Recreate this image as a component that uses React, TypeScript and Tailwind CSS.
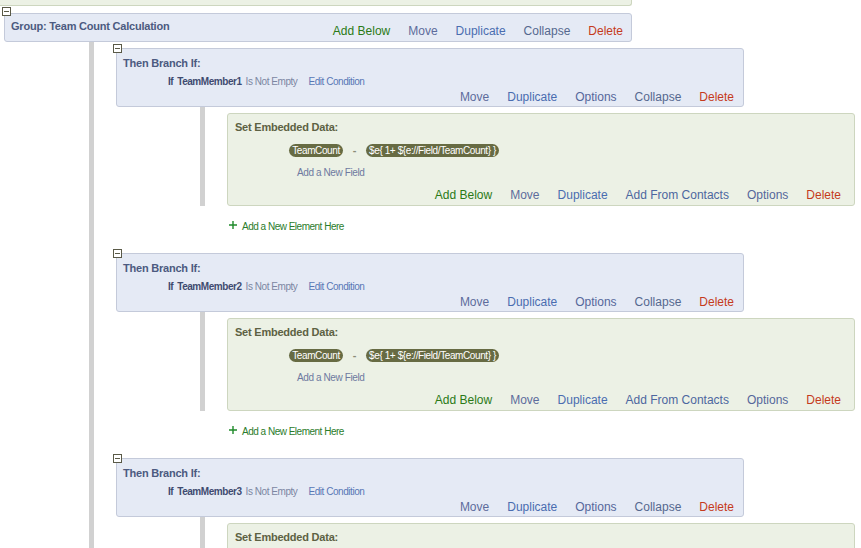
import React from "react";

const Toggle = ({ cls }: { cls: string }) => (
  <div className={`absolute ${cls} w-[9px] h-[9px] border border-[#5a5a48] bg-white flex items-center justify-center z-10`}>
    <div className="w-[5px] h-px bg-[#5a5a48]" />
  </div>
);

const Link = ({ color, children }: { color: string; children: React.ReactNode }) => (
  <span className={color}>{children}</span>
);

const Pill = ({ w, children }: { w: string; children: React.ReactNode }) => (
  <div className={`${w} h-[13px] rounded-full bg-[#676b43] text-white text-[10px] leading-[13px] tracking-[-0.04em] flex items-center justify-center`}>
    {children}
  </div>
);

const Block = ({ n, first }: { n: number; first?: boolean }) => (
  <div className="relative">
    <div className={first ? "pt-[6px]" : "pt-[6px]"}>
      <Toggle cls="left-[-3px] top-[2px]" />
      <div className="w-[628px] h-[59px] bg-[#e5eaf5] border border-[#c4cada] rounded-[3px] flex flex-col">
        <div className="pl-[6px] pt-[8px] text-[11px] leading-[12px] font-bold text-[#4c5a80] tracking-[-0.02em]">
          Then Branch If:
        </div>
        <div className="pl-[51px] mt-[8px] text-[10px] leading-[10px] tracking-[-0.045em] flex items-center">
          <span className="font-bold text-[#3f4b70]">If</span>
          <span className="font-bold text-[#3f4b70] ml-[4px]">TeamMember{n}</span>
          <span className="text-[#7c86a2] ml-[4px]">Is Not Empty</span>
          <span className="text-[#5877b5] ml-[11px]">Edit Condition</span>
        </div>
        <div className="mt-[3px] pr-[9px] flex justify-end gap-[18px] text-[12px] leading-[14px]">
          <Link color="text-[#5d6c9c]">Move</Link>
          <Link color="text-[#4a6db0]">Duplicate</Link>
          <Link color="text-[#55679b]">Options</Link>
          <Link color="text-[#55688f]">Collapse</Link>
          <Link color="text-[#c53a1c]">Delete</Link>
        </div>
      </div>
    </div>
    <div className="flex">
      <div className="w-[84px] shrink-0" />
      <div className="w-[5px] shrink-0 bg-[#d1d1d1]" />
      <div className="pl-[22px] pt-[6px]">
        <div className="w-[628px] h-[93px] bg-[#ecf1e5] border border-[#cdd6bf] rounded-[3px] flex flex-col">
          <div className="pl-[7px] pt-[7px] text-[11px] leading-[12px] font-bold text-[#5d6143] tracking-[-0.02em]">
            Set Embedded Data:
          </div>
          <div className="pl-[61px] mt-[11px] flex items-center h-[13px]">
            <Pill w="w-[54px]">TeamCount</Pill>
            <span className="w-[23px] text-center text-[11px] font-bold text-[#8a8c78] leading-[13px]">-</span>
            <Pill w="w-[133px]">{"$e{ 1+ ${e://Field/TeamCount} }"}</Pill>
          </div>
          <div className="pl-[69px] mt-[11px] text-[10px] leading-[10px] tracking-[-0.04em] text-[#6e7aa0]">
            Add a New Field
          </div>
          <div className="mt-[10px] pr-[13px] flex justify-end gap-[18px] text-[12px] leading-[14px]">
            <Link color="text-[#2a7a16]">Add Below</Link>
            <Link color="text-[#5d6c9c]">Move</Link>
            <Link color="text-[#4a6db0]">Duplicate</Link>
            <Link color="text-[#4d679f]">Add From Contacts</Link>
            <Link color="text-[#55679b]">Options</Link>
            <Link color="text-[#c53a1c]">Delete</Link>
          </div>
        </div>
      </div>
    </div>
    <div className="h-[41px] flex items-center pl-[113px]">
      <svg width="8" height="8" viewBox="0 0 8 8" className="mb-[3px]">
        <path d="M4 0V8M0 4H8" stroke="#1f8a2a" strokeWidth="1.4" />
      </svg>
      <span className="ml-[5px] text-[10px] leading-[10px] tracking-[-0.05em] text-[#2b7c2c]">
        Add a New Element Here
      </span>
    </div>
  </div>
);

export default function App() {
  return (
    <div
      className="w-[861px] h-[548px] overflow-hidden bg-white relative"
      style={{ fontFamily: '"Liberation Sans", Arial, sans-serif' }}
    >
      <div className="w-[632px] h-[6px] bg-[#ecf1e5] border-r border-b border-[#cdd6bf] rounded-br-[3px]" />
      <div className="relative mt-[7px] ml-[4px]">
        <Toggle cls="left-[-2px] top-[-6px]" />
        <div className="w-[628px] h-[29px] bg-[#e5eaf5] border border-[#c4cada] rounded-[3px] flex items-center justify-between">
          <div className="pl-[6px] pb-[3px] text-[11px] leading-[12px] font-bold text-[#4c5a80] tracking-[-0.02em]">
            Group: Team Count Calculation
          </div>
          <div className="pr-[8px] pt-[6px] flex gap-[18px] text-[12px] leading-[14px]">
            <Link color="text-[#2a7a16]">Add Below</Link>
            <Link color="text-[#5d6c9c]">Move</Link>
            <Link color="text-[#4a6db0]">Duplicate</Link>
            <Link color="text-[#55688f]">Collapse</Link>
            <Link color="text-[#c53a1c]">Delete</Link>
          </div>
        </div>
      </div>
      <div className="flex">
        <div className="w-[89px] shrink-0" />
        <div className="w-[5px] shrink-0 bg-[#d1d1d1]" />
        <div className="pl-[22px] flex flex-col">
          <Block n={1} first />
          <Block n={2} />
          <Block n={3} />
        </div>
      </div>
    </div>
  );
}
